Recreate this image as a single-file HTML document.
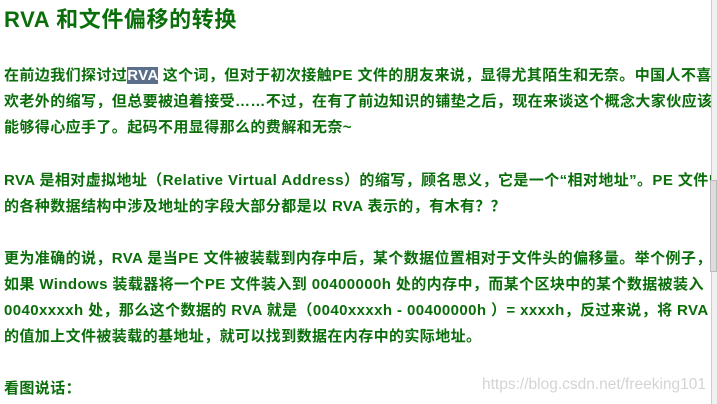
<!DOCTYPE html>
<html><head><meta charset="utf-8"><style>
body{margin:0;width:717px;height:404px;overflow:hidden;background:#fff;position:relative;font-family:"Liberation Sans","Noto Sans CJK SC",sans-serif;}
.l{position:absolute;left:4px;white-space:nowrap;font-size:15px;letter-spacing:0.4px;font-weight:bold;color:#0a6e0a;line-height:18px;}
.t{position:absolute;left:4px;top:2px;font-size:22px;letter-spacing:0.6px;font-weight:bold;color:#0a6e0a;white-space:nowrap}
.hl{background:#5b6f8a;color:#fff}
.sb{position:absolute;right:0;top:0;width:5px;height:404px;background:#f0f0f0;border-left:1px solid #ccc}
.th{position:absolute;right:0;top:180px;width:5px;height:90px;background:#ddd;border:1px solid #bbb}
.wm{position:absolute;left:482px;top:376px;font-size:15.5px;color:#d4d4d4;white-space:nowrap}
</style></head><body>
<div class="t">RVA 和文件偏移的转换</div>
<div class="l" style="top:67px">在前边我们探讨过<span class="hl">RVA</span> 这个词，但对于初次接触PE 文件的朋友来说，显得尤其陌生和无奈。中国人不喜</div>
<div class="l" style="top:93px">欢老外的缩写，但总要被迫着接受……不过，在有了前边知识的铺垫之后，现在来谈这个概念大家伙应该</div>
<div class="l" style="top:119px">能够得心应手了。起码不用显得那么的费解和无奈~</div>
<div class="l" style="top:172px">RVA 是相对虚拟地址（Relative Virtual Address）的缩写，顾名思义，它是一个“相对地址”。PE 文件中</div>
<div class="l" style="top:198px">的各种数据结构中涉及地址的字段大部分都是以 RVA 表示的，有木有？？</div>
<div class="l" style="top:250px">更为准确的说，RVA 是当PE 文件被装载到内存中后，某个数据位置相对于文件头的偏移量。举个例子，</div>
<div class="l" style="top:276px">如果 Windows 装载器将一个PE 文件装入到 00400000h 处的内存中，而某个区块中的某个数据被装入</div>
<div class="l" style="top:302px">0040xxxxh 处，那么这个数据的 RVA 就是（0040xxxxh - 00400000h ）= xxxxh，反过来说，将 RVA</div>
<div class="l" style="top:328px">的值加上文件被装载的基地址，就可以找到数据在内存中的实际地址。</div>
<div class="l" style="top:380px">看图说话：</div>
<div class="wm">https://blog.csdn.net/freeking101</div>
<div class="sb"></div><div class="th"></div>
</body></html>
